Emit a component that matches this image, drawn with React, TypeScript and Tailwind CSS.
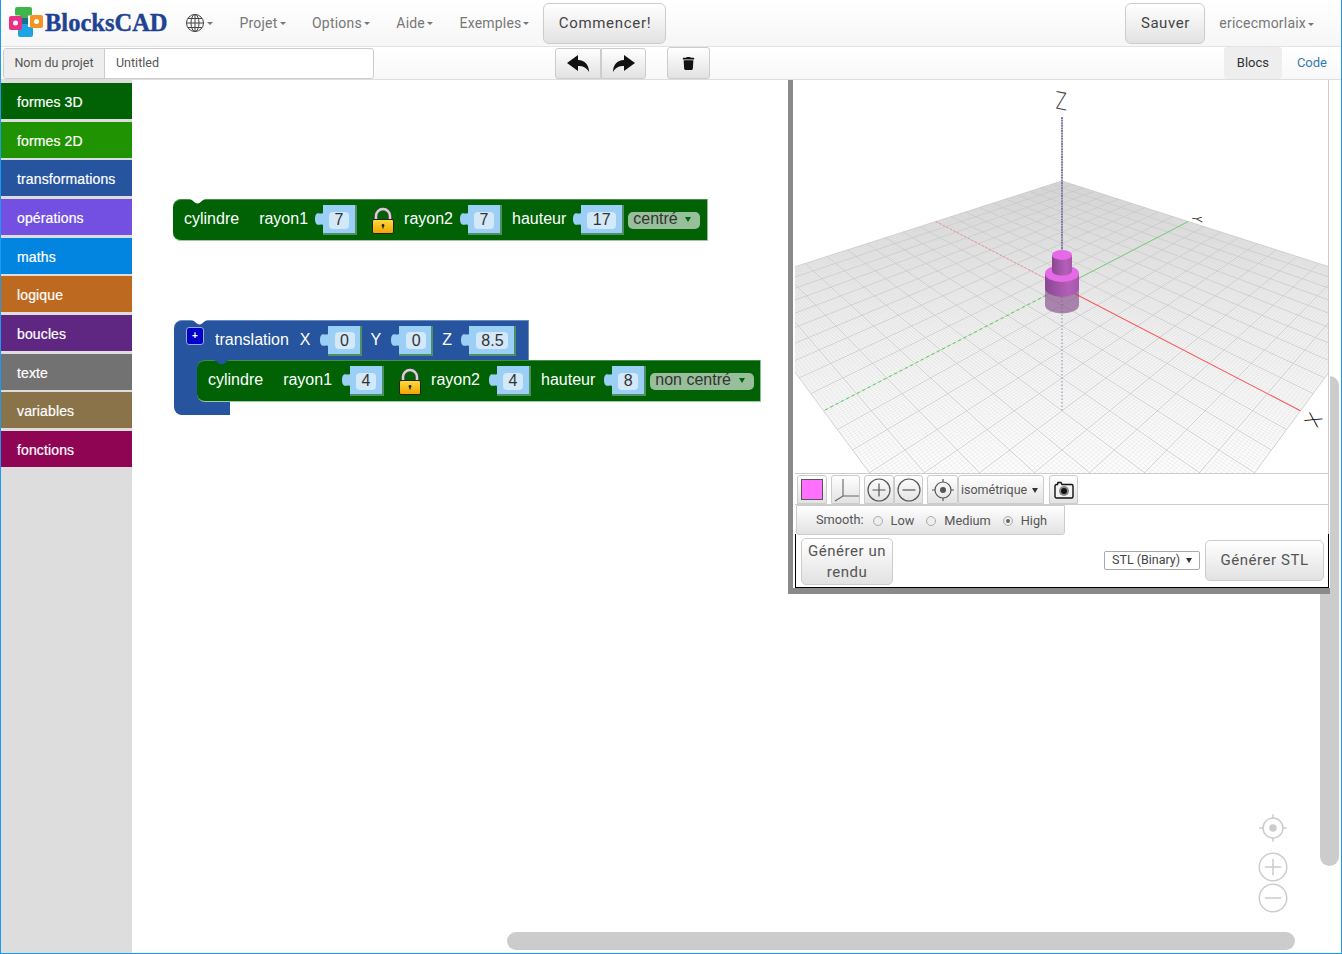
import { FaTrash } from "react-icons/fa";

const categories = [
  { label: "formes 3D", color: "bg-[#006205]" },
  { label: "formes 2D", color: "bg-[#209303]" },
  { label: "transformations", color: "bg-[#26549e]" },
  { label: "opérations", color: "bg-[#7450e2]" },
  { label: "maths", color: "bg-[#0185e1]" },
  { label: "logique", color: "bg-[#be6920]" },
  { label: "boucles", color: "bg-[#5f2682]" },
  { label: "texte", color: "bg-[#727272]" },
  { label: "variables", color: "bg-[#8a7249]" },
  { label: "fonctions", color: "bg-[#8f0554]" },
];

const btn = "border border-[#ccc] bg-linear-to-b from-white to-[#e2e2e2]";

// floor corners: back, right, front, left
const quad = [
  [1062, 181],
  [1392, 287],
  [1062, 733],
  [732, 287],
];

function project(u: number, v: number) {
  const [[x0, y0], [x1, y1], [x2, y2], [x3, y3]] = quad;
  const dx1 = x1 - x2;
  const dx2 = x3 - x2;
  const sx = x0 - x1 + x2 - x3;
  const dy1 = y1 - y2;
  const dy2 = y3 - y2;
  const sy = y0 - y1 + y2 - y3;
  const den = dx1 * dy2 - dx2 * dy1;
  const g = (sx * dy2 - dx2 * sy) / den;
  const h = (dx1 * sy - sx * dy1) / den;
  const w = g * u + h * v + 1;
  return {
    x: ((x1 - x0 + g * x1) * u + (x3 - x0 + h * x3) * v + x0) / w,
    y: ((y1 - y0 + g * y1) * u + (y3 - y0 + h * y3) * v + y0) / w,
  };
}

function gridPath(step: number, skip?: number) {
  let d = "";
  for (let i = 0; i <= step; i++) {
    if (skip && i % skip === 0) continue;
    const t = i / step;
    const a = project(t, 0);
    const b = project(t, 1);
    const c = project(0, t);
    const e = project(1, t);
    d += `M${a.x.toFixed(1)} ${a.y.toFixed(1)}L${b.x.toFixed(1)} ${b.y.toFixed(1)}`;
    d += `M${c.x.toFixed(1)} ${c.y.toFixed(1)}L${e.x.toFixed(1)} ${e.y.toFixed(1)}`;
  }
  return d;
}

function axis(u0: number, v0: number, u1: number, v1: number) {
  const a = project(u0, v0);
  const b = project(u1, v1);
  return `M${a.x} ${a.y}L${b.x} ${b.y}`;
}

function Caret() {
  return <span className="ml-[2px] inline-block border-x-[3px] border-t-[3px] border-x-transparent border-t-[#777] align-middle" />;
}

function NavItem({ label }: { label: string }) {
  return (
    <span className="whitespace-nowrap text-[14px] tracking-[0.2px] text-[#777]">
      {label}
      <Caret />
    </span>
  );
}

function Logo() {
  return (
    <svg width="36" height="34" viewBox="0 0 36 34">
      <path d="M7 3a2 2 0 0 1 2-2h13a2 2 0 0 1 2 2v5a1.5 1.5 0 0 1-1.5 1.5H20V13H12V9.5H8.5A1.5 1.5 0 0 1 7 8z" fill="#3fb54c" />
      <path d="M13 17h7v4h3.5a1.5 1.5 0 0 1 1.5 1.5V29a2 2 0 0 1-2 2H12a2 2 0 0 1-2-2v-4.5a1.5 1.5 0 0 1 1.5-1.5H13z" fill="#1ea3e3" />
      <rect x="12" y="12" width="8" height="6" fill="#1b6f8c" />
      <rect x="1" y="10" width="13" height="14" rx="2" fill="#ea2f86" />
      <circle cx="7.5" cy="17" r="2.5" fill="#fff" />
      <rect x="22" y="9" width="13" height="13" rx="2" fill="#f39422" />
      <circle cx="28.5" cy="15.5" r="2.5" fill="#fff" />
    </svg>
  );
}

function Notch({ fill, className }: { fill: string; className: string }) {
  return (
    <svg width="17" height="5" viewBox="0 0 17 5" className={`absolute top-[-1px] ${className}`}>
      <path d="M0 0C4 0 5 4.5 8.5 4.5S13 0 17 0Z" fill={fill} />
    </svg>
  );
}

function Label({ text, className = "" }: { text: string; className?: string }) {
  return <span className={`relative top-[-1px] whitespace-nowrap text-[16px] text-white ${className}`}>{text}</span>;
}

function Value({ value, outer, inner, className = "" }: { value: string; outer: string; inner: string; className?: string }) {
  return (
    <div className={`relative flex h-[30px] items-center justify-center border-r-2 border-b-2 border-[#4f8f63] bg-[#9ccff5] ${outer} ${className}`}>
      <svg width="8" height="14" viewBox="0 0 8 14" className="absolute top-[7px] left-[-8px]">
        <path d="M8 1C6 2.5 4 .5 2 1.5C-.7 3-.7 11 2 12.5C4 13.5 6 11.5 8 13Z" fill="#9ccff5" />
      </svg>
      <span className={`relative top-[1px] flex h-[17px] items-center justify-center rounded-[4px] bg-[#d3e8f9] text-[16px] text-[#333] ${inner}`}>{value}</span>
    </div>
  );
}

function Lock({ className = "" }: { className?: string }) {
  return (
    <svg width="22" height="27" viewBox="0 0 22 27" className={className}>
      <defs>
        <linearGradient id="lockBody" x1="0" y1="0" x2="0" y2="1">
          <stop offset="0" stopColor="#ffdc3c" />
          <stop offset="1" stopColor="#f2a200" />
        </linearGradient>
      </defs>
      <path d="M4 13V9a7 7 0 0 1 14 0v4" fill="none" stroke="#444" strokeWidth="4" />
      <path d="M4 13V9a7 7 0 0 1 14 0v4" fill="none" stroke="#d4d4d4" strokeWidth="2.4" />
      <rect x="0.5" y="12.5" width="21" height="14" rx="1.5" fill="url(#lockBody)" stroke="#222" />
      <circle cx="11" cy="18.5" r="1.4" fill="#222" />
      <rect x="10.4" y="18.5" width="1.2" height="3" fill="#222" />
    </svg>
  );
}

function Dropdown({ text, className }: { text: string; className: string }) {
  return (
    <div className={`flex h-[17px] items-center justify-between rounded-[5px] bg-[#97bf9a] pr-[9px] pl-[5px] text-[16px] text-[#333] ${className}`}>
      <span className="relative top-[-1px] whitespace-nowrap">{text}</span>
      <span className="relative top-[-1px] inline-block border-x-[3px] border-t-[5px] border-x-transparent border-t-[#006205]" />
    </div>
  );
}

function Floor() {
  const redFar = axis(0, 0.5, 0.5, 0.5);
  const redNear = axis(0.5, 0.5, 1, 0.5);
  const greenFar = axis(0.5, 0, 0.5, 0.5);
  const greenNear = axis(0.5, 0.5, 0.5, 1);
  return (
    <svg width="533" height="393" viewBox="795 80 533 393" className="block">
      <defs>
        <linearGradient id="floor" gradientUnits="userSpaceOnUse" x1="0" y1="181" x2="0" y2="473">
          <stop offset="0" stopColor="#e6e6e6" />
          <stop offset="0.5" stopColor="#f4f4f4" />
          <stop offset="1" stopColor="#fdfdfd" />
        </linearGradient>
        <linearGradient id="cyl" x1="0" y1="0" x2="1" y2="0">
          <stop offset="0" stopColor="#8a4790" />
          <stop offset="0.7" stopColor="#b45fb8" />
          <stop offset="1" stopColor="#a656aa" />
        </linearGradient>
      </defs>
      <polygon points={quad.map((p) => p.join(",")).join(" ")} fill="url(#floor)" />
      <path d={gridPath(200, 10)} stroke="#c4c4c4" strokeWidth="0.2" fill="none" />
      <path d={gridPath(20)} stroke="#c6c6c6" strokeWidth="0.8" fill="none" />
      <path d={redFar} stroke="#ff7a7a" strokeWidth="0.9" strokeDasharray="2 2" fill="none" />
      <path d={redNear} stroke="#ff5a5a" strokeWidth="1.1" fill="none" />
      <path d={greenFar} stroke="#74cf74" strokeWidth="1" fill="none" />
      <path d={greenNear} stroke="#5fd35f" strokeWidth="1.1" strokeDasharray="3 3" fill="none" />
      <path d="M1062 117V250" stroke="#7f7faa" strokeWidth="2" strokeDasharray="2 0.6" fill="none" />
      <path d="M1062 297V410" stroke="#a6a6c4" strokeWidth="1.4" strokeDasharray="1.5 2" fill="none" />
      {/* part of the large cylinder under the floor */}
      <path d="M1045 288V305a17 8.5 0 0 0 34 0V288Z" fill="#7d4185" fillOpacity="0.6" />
      {/* large cylinder */}
      <path d="M1045 273.5V288a17 9 0 0 0 34 0V273.5Z" fill="url(#cyl)" />
      <ellipse cx="1062" cy="273.5" rx="17" ry="8.5" fill="#e46ae8" />
      {/* small cylinder */}
      <path d="M1052 255V271a10 4.5 0 0 0 20 0V255Z" fill="url(#cyl)" />
      <ellipse cx="1062" cy="255" rx="10" ry="5" fill="#e46ae8" />
      <text x="0" y="0" transform="matrix(0.95 0.18 0 1.25 1055.5 108.5)" fontFamily="Lato, sans-serif" fontWeight="300" fontSize="20" fill="#444">Z</text>
      <text x="0" y="0" transform="matrix(0.1 1 -1.5 -0.2 1192 215.5)" fontFamily="Lato, sans-serif" fontWeight="400" fontSize="9" fill="#333">Y</text>
      <text x="0" y="0" transform="matrix(1.5 0.75 -0.41 0.7 1303 420)" fontFamily="Lato, sans-serif" fontWeight="300" fontSize="17" fill="#111">X</text>
    </svg>
  );
}

function Radio({ checked = false }: { checked?: boolean }) {
  return (
    <span className="flex h-[10px] w-[10px] items-center justify-center rounded-full border border-[#aaa] bg-[#eee]">
      {checked && <span className="h-[4px] w-[4px] rounded-full bg-[#666]" />}
    </span>
  );
}

function PlusIcon({ color = "#555", size = 24 }: { color?: string; size?: number }) {
  return (
    <svg width={size} height={size} viewBox="0 0 24 24">
      <circle cx="12" cy="12" r="11" fill="none" stroke={color} strokeWidth="1.2" />
      <path d="M12 5.5V18.5M5.5 12H18.5" stroke={color} strokeWidth="1.2" />
    </svg>
  );
}

function MinusIcon({ color = "#555", size = 24 }: { color?: string; size?: number }) {
  return (
    <svg width={size} height={size} viewBox="0 0 24 24">
      <circle cx="12" cy="12" r="11" fill="none" stroke={color} strokeWidth="1.2" />
      <path d="M5.5 12H18.5" stroke={color} strokeWidth="1.2" />
    </svg>
  );
}

function TargetIcon({ color = "#555", size = 24 }: { color?: string; size?: number }) {
  return (
    <svg width={size} height={size} viewBox="0 0 24 24">
      <circle cx="12" cy="12" r="8" fill="none" stroke={color} strokeWidth="1.2" />
      <circle cx="12" cy="12" r="3" fill={color} />
      <path d="M12 1V4M12 20V23M1 12H4M20 12H23" stroke={color} strokeWidth="1.2" />
    </svg>
  );
}

function Arrow({ flip = false }: { flip?: boolean }) {
  return (
    <svg width="22" height="17" viewBox="0 0 22 17" className={flip ? "-scale-x-100" : ""}>
      <path d="M0 8L11 0V5C18 5 22 10 22 17C19 12 16 11 11 11V16Z" fill="#111" />
    </svg>
  );
}

function Viewer() {
  return (
    <div className="absolute top-0 left-[787px] z-10 flex h-[514px] w-[542px] flex-col border-b-[6px] border-l-[5px] border-[#8a8a8a] bg-white pr-[1px] pl-[2px] font-['Roboto',sans-serif]">
      <div className="h-[393px] border-r border-[#ccc]">
        <Floor />
      </div>
      <div className="flex h-[31px] items-end border-t border-r border-[#ccc] pl-[2px]">
        <div className={`flex h-[29px] w-[30px] items-center justify-center rounded-t-[3px] ${btn}`}>
          <span className="h-[21px] w-[22px] border border-[#555] bg-[#ff70ff]" />
        </div>
        <div className={`ml-[4px] flex h-[29px] w-[29px] items-center justify-center rounded-t-[3px] ${btn}`}>
          <svg width="26" height="24" viewBox="0 0 26 24">
            <path d="M10 1V18H26M10 18L2 23" fill="none" stroke="#666" strokeWidth="1.1" />
          </svg>
        </div>
        <div className={`ml-[4px] flex h-[29px] w-[30px] items-center justify-center rounded-t-[3px] ${btn}`}>
          <PlusIcon />
        </div>
        <div className={`flex h-[29px] w-[29px] items-center justify-center rounded-t-[3px] ${btn}`}>
          <MinusIcon />
        </div>
        <div className={`ml-[4px] flex h-[29px] w-[31px] items-center justify-center rounded-t-[3px] ${btn}`}>
          <TargetIcon />
        </div>
        <div className={`flex h-[29px] w-[86px] items-center gap-[5px] rounded-t-[3px] pt-[1px] pl-[2px] text-[12.5px] text-[#555] ${btn}`}>
          <span>isométrique</span>
          <span className="inline-block border-x-[3px] border-t-[5px] border-x-transparent border-t-[#333]" />
        </div>
        <div className={`ml-[5px] flex h-[29px] w-[29px] items-center justify-center rounded-t-[3px] ${btn}`}>
          <svg width="20" height="20" viewBox="0 0 20 20">
            <path d="M4 2.5H7L8 4.5H17.5A1.5 1.5 0 0 1 19 6V16.5A1.5 1.5 0 0 1 17.5 18H2.5A1.5 1.5 0 0 1 1 16.5V6A1.5 1.5 0 0 1 2.5 4.5H3.5Z" fill="#f2f2f2" stroke="#111" strokeWidth="1.4" />
            <circle cx="10" cy="11" r="5" fill="#8a8a8a" />
            <circle cx="10" cy="11" r="3" fill="#111" />
          </svg>
        </div>
      </div>
      <div className="flex h-[30px] items-start border-t border-r border-[#ccc] pl-[1px]">
        <div className={`flex h-[30px] w-[269px] items-center rounded-b-[3px] pt-[1px] pl-[19px] text-[12.75px] text-[#555] ${btn}`}>
          <span className="relative top-[-1px] mr-[9px]">Smooth:</span>
          <Radio />
          <span className="mr-[12px] ml-[8px]">Low</span>
          <Radio />
          <span className="mr-[12px] ml-[8px]">Medium</span>
          <Radio checked />
          <span className="ml-[8px]">High</span>
        </div>
      </div>
      <div className="flex h-[54px] items-center justify-between border-x border-b border-black pr-[4px] pl-[5px]">
        <div className={`mt-[2px] flex h-[47px] w-[92px] items-center justify-center rounded-[5px] pt-[1px] text-center text-[15px] leading-[21px] tracking-[0.55px] text-[#555] ${btn}`}>
          Générer un
          <br />
          rendu
        </div>
        <div className="flex items-center gap-[5px]">
          <div className="flex h-[19px] w-[96px] items-center justify-between rounded-[2px] border border-[#aaa] bg-white pr-[7px] pl-[7px] text-[12.5px] text-[#444]">
            <span className="whitespace-nowrap">STL (Binary)</span>
            <span className="inline-block border-x-[3px] border-t-[5px] border-x-transparent border-t-[#333]" />
          </div>
          <div className={`flex h-[41px] w-[119px] items-center justify-center rounded-[5px] text-[15px] tracking-[0.55px] text-[#555] ${btn}`}>Générer STL</div>
        </div>
      </div>
    </div>
  );
}

export default function App() {
  return (
    <div className="flex h-[954px] w-[1342px] flex-col overflow-hidden border-x border-b border-[#1a9af0] bg-white font-['Roboto',sans-serif]">
      <header className="flex h-[47px] shrink-0 items-center border-b border-[#e3e3e3] bg-linear-to-b from-white to-[#f6f6f6] pr-[27px] pl-[7px]">
        <Logo />
        <span className="ml-[1px] font-['Liberation_Serif',serif] text-[24.5px] leading-none font-bold text-[#1f4394] [-webkit-text-stroke:0.4px_#1f4394]">BlocksCAD</span>
        <svg width="20" height="20" viewBox="0 0 20 20" className="ml-[17px]" fill="none" stroke="#444" strokeWidth="1">
          <circle cx="10" cy="10" r="8.5" />
          <ellipse cx="10" cy="10" rx="4" ry="8.5" />
          <path d="M10 1.5V18.5M1.5 10H18.5M3 5.5H17M3 14.5H17" />
        </svg>
        <Caret />
        <div className="ml-[27px] flex items-center gap-[26.5px]">
          <NavItem label="Projet" />
          <NavItem label="Options" />
          <NavItem label="Aide" />
          <NavItem label="Exemples" />
        </div>
        <div className={`ml-[14px] flex h-[41px] w-[123px] items-center justify-center rounded-[6px] text-[15px] tracking-[0.7px] text-[#444] ${btn}`}>Commencer!</div>
        <div className={`ml-auto flex h-[41px] w-[80px] items-center justify-center rounded-[6px] text-[15px] tracking-[0.55px] text-[#444] ${btn}`}>Sauver</div>
        <div className="ml-[14px]">
          <NavItem label="ericecmorlaix" />
        </div>
      </header>

      <div className="flex h-[33px] shrink-0 items-center border-b border-[#ddd] bg-linear-to-b from-white to-[#f8f8f8] pr-[14px] pl-[2px] text-[13px]">
        <div className="flex h-[31px] w-[371px] overflow-hidden rounded-[3px] border border-[#ccc] bg-white text-[12.5px]">
          <span className="flex w-[101px] items-center justify-center border-r border-[#ccc] bg-[#eee] text-[#555]">Nom du projet</span>
          <span className="flex items-center pt-[1px] pl-[11px] text-[#555]">Untitled</span>
        </div>
        <div className={`ml-[181px] flex h-[31px] w-[46px] items-center justify-center rounded-l-[3px] ${btn}`}>
          <Arrow />
        </div>
        <div className={`flex h-[31px] w-[45px] items-center justify-center rounded-r-[3px] ${btn}`}>
          <Arrow flip />
        </div>
        <div className={`ml-[21px] flex h-[32px] w-[43px] items-center justify-center rounded-[3px] ${btn}`}>
          <FaTrash size={13} color="#111" />
        </div>
        <div className="ml-auto flex h-full items-center">
          <span className="flex h-full w-[58px] items-center justify-center rounded-[3px] bg-[#eee] text-[#333]">Blocs</span>
          <span className="ml-[15px] text-[#337ab7]">Code</span>
        </div>
      </div>

      <main className="relative flex min-h-0 flex-1 font-['Liberation_Sans',sans-serif]">
        <nav className="flex w-[131px] shrink-0 flex-col gap-[2.67px] bg-[#ddd] pt-[3px]">
          {categories.map((c) => (
            <div key={c.label} className={`flex h-[36px] items-center pt-[3px] pl-[16px] text-[14px] tracking-[0.13px] text-white [-webkit-text-stroke:0.2px_white] ${c.color}`}>
              {c.label}
            </div>
          ))}
        </nav>

        {/* workspace */}
        <div className="relative flex-1">
          <div className="absolute top-[119px] left-[41px] flex h-[42px] w-[535px] items-center rounded-l-[8px] border-t border-r border-b border-t-[#478c4b] border-r-[#8fbf92] border-b-[#9fc7a2] bg-[#006205] pl-[11px]">
            <Notch fill="#fff" className="left-[16px]" />
            <Label text="cylindre" />
            <Label text="rayon1" className="ml-[20px]" />
            <Value value="7" outer="w-[34px]" inner="w-[20px]" className="ml-[15px]" />
            <Lock className="ml-[15px]" />
            <Label text="rayon2" className="ml-[10px]" />
            <Value value="7" outer="w-[34px]" inner="w-[20px]" className="ml-[15px]" />
            <Label text="hauteur" className="ml-[10px]" />
            <Value value="17" outer="w-[43px]" inner="w-[29px]" className="ml-[15px]" />
            <Dropdown text="centré" className="ml-[4px] w-[72px]" />
          </div>

          <div className="absolute top-[240px] left-[42px] flex flex-col items-start">
            <div className="relative flex h-[40px] w-[355px] items-center rounded-tl-[8px] border-t border-r border-t-[#6a8bbf] border-r-[#6a8bbf] bg-[#26549e] pl-[12px]">
              <Notch fill="#fff" className="left-[17px]" />
              <span className="relative top-[-5px] flex h-[18px] w-[18px] items-center justify-center rounded-[3px] border border-[#9aa8e0] bg-[#0000c8] text-[10px] leading-none font-bold text-white">+</span>
              <Label text="translation" className="ml-[11px]" />
              <Label text="X" className="ml-[11px]" />
              <Value value="0" outer="w-[34px]" inner="w-[20px]" className="ml-[17px] pl-[2px]" />
              <Label text="Y" className="ml-[9px]" />
              <Value value="0" outer="w-[34px]" inner="w-[20px]" className="ml-[18px] pl-[2px]" />
              <Label text="Z" className="ml-[9px]" />
              <Value value="8.5" outer="w-[47px]" inner="w-[32px]" className="ml-[17px] pl-[2px]" />
            </div>
            <div className="flex">
              <div className="-mr-[8px] w-[31px] bg-[#26549e]" />
              <div className="relative flex h-[42px] w-[564px] items-center rounded-l-[8px] border-t border-r border-b border-t-[#478c4b] border-r-[#8fbf92] border-b-[#9fc7a2] bg-[#006205] pl-[11px]">
                <Notch fill="#26549e" className="left-[16px]" />
                <Label text="cylindre" />
                <Label text="rayon1" className="ml-[20px]" />
                <Value value="4" outer="w-[34px]" inner="w-[20px]" className="ml-[18px]" />
                <Lock className="ml-[15px]" />
                <Label text="rayon2" className="ml-[10px]" />
                <Value value="4" outer="w-[34px]" inner="w-[20px]" className="ml-[17px]" />
                <Label text="hauteur" className="ml-[10px]" />
                <Value value="8" outer="w-[34px]" inner="w-[20px]" className="ml-[17px]" />
                <Dropdown text="non centré" className="ml-[4px] w-[104px]" />
              </div>
            </div>
            <div className="h-[13px] w-[56px] rounded-bl-[8px] bg-[#26549e]" />
          </div>

          {/* workspace zoom controls */}
          <div className="absolute top-[733px] left-[1126px] flex flex-col items-center gap-[1px]">
            <TargetIcon color="#ccc" size={30} />
            <div className="mt-[8px]">
              <PlusIcon color="#ccc" size={30} />
            </div>
            <MinusIcon color="#ccc" size={30} />
          </div>

          {/* scrollbars */}
          <div className="absolute top-[852px] left-[375px] h-[18px] w-[788px] rounded-full bg-[#ccc]" />
          <div className="absolute top-[296px] left-[1188px] h-[490px] w-[19px] rounded-full bg-[#ccc]" />
        </div>

        <Viewer />
      </main>
    </div>
  );
}
